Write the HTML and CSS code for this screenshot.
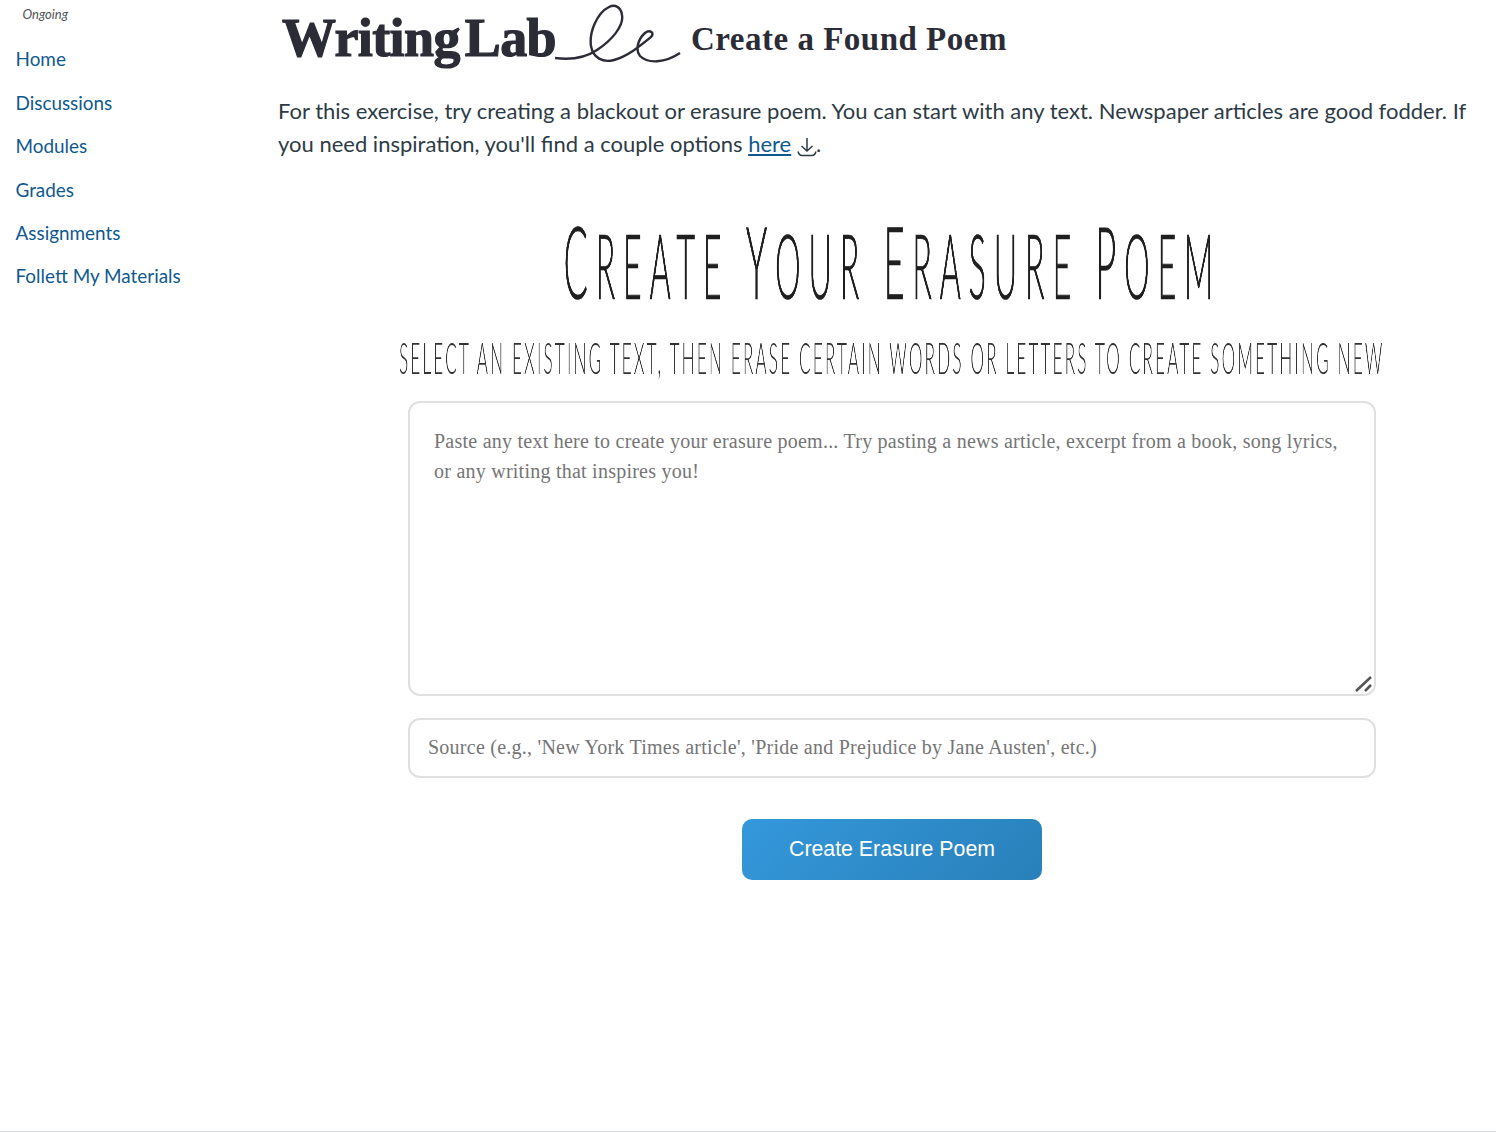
FILE: index.html
```html
<html>

<head>
  <title>Create a Found Poem</title>
  <link rel="stylesheet" href="styles.css">
</head>

<body>
  <div class="page">
    <div class="sidebar">
      <div class="term">Ongoing</div>
      <a class="navlink" href="#">Home</a>
      <a class="navlink" href="#">Discussions</a>
      <a class="navlink" href="#">Modules</a>
      <a class="navlink" href="#">Grades</a>
      <a class="navlink" href="#">Assignments</a>
      <a class="navlink" href="#">Follett My Materials</a>
    </div>
    <div class="main">
      <div class="banner">
        <span class="lab">Writing Lab</span>
        <svg class="flourish" width="126" height="62" viewBox="555 3 126 62">
          <path d="M555 58 C570 60 585 58 597 50 C612 40 624 26 622 15 C621 7 615 4 609 7 C597 13 589 32 591 46 C593 58 603 63 614 60 C628 56 640 46 651 37 C655 33 650 29 645 33 C638 39 635 50 640 56 C648 64 665 63 680 53" />
        </svg>
        <span class="subtitle">Create a Found Poem</span>
      </div>
      <p class="intro">For this exercise, try creating a blackout or erasure poem. You can start with any text. Newspaper articles are good fodder. If you need inspiration, you'll find a couple options <a href="#">here</a>
        <svg class="dl" width="20" height="20" viewBox="0 0 20 20">
          <path d="M10 1 V14 M4.5 9 L10 14 L15.5 9 M1 14.5 C2 18 3 18.5 5 18.5 H15 C17 18.5 18 18 19 14.5" />
        </svg>.</p>
      <div class="tool">
        <h1 class="tool_title"><span class="squeeze"><span class="cap">C</span>REATE <span class="cap">Y</span>OUR <span class="cap">E</span>RASURE <span class="cap">P</span>OEM</span></h1>
        <h2 class="tool_sub"><span class="squeeze">SELECT AN EXISTING TEXT, THEN ERASE CERTAIN WORDS OR LETTERS TO CREATE SOMETHING NEW</span></h2>
        <div class="areawrap">
          <textarea class="poembox" placeholder="Paste any text here to create your erasure poem... Try pasting a news article, excerpt from a book, song lyrics, or any writing that inspires you!"></textarea>
          <svg class="grip" width="18" height="18" viewBox="0 0 18 18">
            <path d="M1 15 L16 1 M10 15 L16 9" />
          </svg>
        </div>
        <input class="sourcebox" placeholder="Source (e.g., 'New York Times article', 'Pride and Prejudice by Jane Austen', etc.)">
        <div class="button">Create Erasure Poem</div>
      </div>
    </div>
  </div>
</body>

</html>
```

FILE: styles.css
```css
html, body {
  margin: 0;
  height: 100%;
  overflow: hidden;
}

body {
  font-family: Lato, Arial, sans-serif;
  color: #2d3b45;
  background-color: white;
}

.page {
  display: flex;
  box-sizing: border-box;
  height: 1132px;
  border-bottom: 1px solid #d8dcdf;
}

.sidebar {
  width: 278px;
  flex: none;
  box-sizing: border-box;
  padding: 7px 0 0 15.5px;
}

.term {
  font-size: 13px;
  line-height: 15px;
  font-style: italic;
  color: #4f5558;
  padding-left: 7px;
  margin-bottom: 23.4px;
}

.navlink {
  display: block;
  font-size: 18.9px;
  line-height: 27px;
  margin-bottom: 16.4px;
  color: #10598f;
  text-decoration: none;
}

.main {
  flex: 1;
  min-width: 0;
  padding-right: 20px;
}

.banner {
  display: flex;
  align-items: flex-start;
  height: 76px;
  padding-left: 4px;
  color: #2b2c36;
  font-family: "Liberation Serif", serif;
  font-weight: bold;
}

.lab {
  font-size: 54px;
  line-height: 76px;
  letter-spacing: -0.6px;
  word-spacing: -8px;
  -webkit-text-stroke: 1.2px #2b2c36;
  white-space: nowrap;
}

.flourish {
  margin: 3px 0 0 -1px;
  flex: none;
}

.flourish path {
  fill: none;
  stroke: #2b2c36;
  stroke-width: 2.4;
}

.subtitle {
  font-size: 33px;
  line-height: 78px;
  letter-spacing: 0.5px;
  margin-left: 10px;
  white-space: nowrap;
}

.intro {
  font-size: 22px;
  line-height: 33px;
  margin: 18px 0 0;
}

.intro a {
  color: #10598f;
}

.dl {
  vertical-align: -5px;
  margin-right: -1px;
}

.dl path {
  fill: none;
  stroke: #2d3b45;
  stroke-width: 1.5;
}

.tool {
  display: flex;
  flex-direction: column;
  align-items: center;
  width: 968px;
  margin-left: 130px;
}

.tool_title, .tool_sub {
  display: flex;
  justify-content: center;
  width: 100%;
  margin: 0;
  font-family: Lato, sans-serif;
  color: #1f1f1f;
  white-space: nowrap;
}

/* no narrow display font here, so squeeze Lato sideways */
.squeeze {
  display: block;
  flex: none;
  transform: scaleX(0.36);
  will-change: transform;
}

.tool_title {
  height: 90px;
  margin-top: 55px;
  font-size: 90px;
  line-height: 90px;
  font-weight: 300;
  letter-spacing: 21.5px;
  -webkit-text-stroke: 0.7px #1f1f1f;
}

.cap {
  font-size: 100px;
}

.tool_sub {
  height: 44px;
  margin-top: 31px;
  font-size: 43px;
  line-height: 44px;
  font-weight: 300;
  letter-spacing: 5.3px;
  color: #333;
}

.tool_sub .squeeze {
  transform: scaleX(0.4);
}

.areawrap {
  position: relative;
  width: 100%;
  margin-top: 21px;
}

.poembox {
  display: block;
  box-sizing: border-box;
  width: 100%;
  height: 295px;
  padding: 23px 24px;
  border: 2px solid #e0e0e0;
  border-radius: 12px;
  outline: none;
  resize: none;
  font-family: "Liberation Serif", serif;
  font-size: 20px;
  letter-spacing: 0.24px;
  line-height: 30px;
}

.sourcebox {
  display: block;
  box-sizing: border-box;
  width: 100%;
  height: 60px;
  margin-top: 22px;
  padding: 0 18px 2px;
  border: 2px solid #e0e0e0;
  border-radius: 12px;
  outline: none;
  font-family: "Liberation Serif", serif;
  font-size: 20px;
  letter-spacing: 0.25px;
}

.poembox::placeholder, .sourcebox::placeholder {
  color: #757575;
}

/* drag handle sits over the corner of the textarea */
.grip {
  position: absolute;
  right: 3px;
  bottom: 2px;
}

.grip path {
  fill: none;
  stroke: #555;
  stroke-width: 2.5;
}

.button {
  box-sizing: border-box;
  width: 300px;
  height: 61px;
  margin-top: 41px;
  border-radius: 10px;
  background: linear-gradient(135deg, #3498db, #2980b9);
  color: white;
  font-family: "Liberation Sans", Arial, sans-serif;
  font-size: 21.3px;
  line-height: 61px;
  text-align: center;
}
```
